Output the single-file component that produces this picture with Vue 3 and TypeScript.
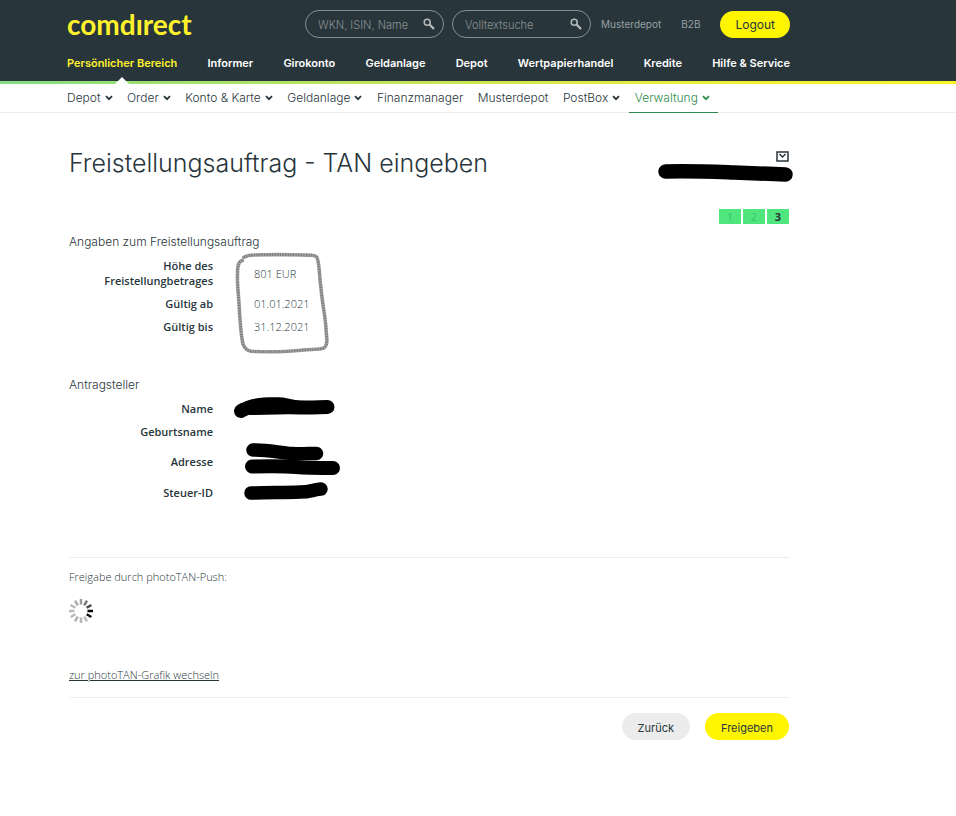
<script setup lang="ts">
interface NavItem {
  label: string
  menu?: boolean
  active?: boolean
}

const mainNav: NavItem[] = [
  { label: 'Persönlicher Bereich', active: true },
  { label: 'Informer' },
  { label: 'Girokonto' },
  { label: 'Geldanlage' },
  { label: 'Depot' },
  { label: 'Wertpapierhandel' },
  { label: 'Kredite' },
  { label: 'Hilfe & Service' },
]

const subNav: NavItem[] = [
  { label: 'Depot', menu: true },
  { label: 'Order', menu: true },
  { label: 'Konto & Karte', menu: true },
  { label: 'Geldanlage', menu: true },
  { label: 'Finanzmanager' },
  { label: 'Musterdepot' },
  { label: 'PostBox', menu: true },
  { label: 'Verwaltung', menu: true, active: true },
]

const searches = [
  { id: 'search-wkn', placeholder: 'WKN, ISIN, Name' },
  { id: 'search-text', placeholder: 'Volltextsuche' },
]

const steps = [1, 2, 3]

// Spinner spokes, clockwise from twelve o'clock
const spokes = ['#999', '#777', '#444', '#000', '#111', '#bbb', '#b5b5b5', '#b0b0b0', '#b8b8b8', '#bbb', '#b8b8b8', '#aaa']

const framePath =
  'M10.5 8.5C6 9 5.500 15 5.500 22C5 34 7 46 7.500 60C8.500 74 9 84 11 92C13 98 17 99.500 22 99.500C36 100 52 100 66 98.500C78 97 86 98 92 96C97 92 94 84 94 76C93 62 90 50 89 36C87 24 88 14 85 5.500C83 2 76 3.500 70 3C54 2.500 36 2.500 22 3C18 3 14 4 11.500 5.500'
</script>

<template>
  <div class="page">
    <header class="header">
      <div class="wrap">
        <div class="topbar">
          <a class="logo" href="#" aria-label="comdirect">comdırect</a>
          <form class="searches" @submit.prevent>
            <label v-for="s in searches" :key="s.id" class="search" :for="s.id">
              <input :id="s.id" type="text" :placeholder="s.placeholder" :aria-label="s.placeholder" />
              <svg viewBox="0 0 12 12" aria-hidden="true">
                <circle cx="4.2" cy="4.2" r="3" />
                <path class="handle" d="M6.8 6.8 10.4 10.4" />
              </svg>
            </label>
          </form>
          <a class="meta" href="#">Musterdepot</a>
          <a class="meta" href="#">B2B</a>
          <button class="btn primary logout" type="button">Logout</button>
        </div>
        <nav class="main-nav">
          <a v-for="n in mainNav" :key="n.label" href="#" :class="{ active: n.active }">{{ n.label }}</a>
        </nav>
      </div>
    </header>

    <div class="subbar">
      <nav class="sub-nav">
        <a v-for="n in subNav" :key="n.label" href="#" :class="{ active: n.active }">
          {{ n.label }}
          <svg v-if="n.menu" viewBox="0 0 8 6" aria-hidden="true"><path d="M1 1.2 4 4.2 7 1.2" /></svg>
        </a>
      </nav>
    </div>

    <main class="content">
      <div class="title-row">
        <h1>Freistellungsauftrag - TAN eingeben</h1>
        <a class="mail" href="#" aria-label="PostBox">
          <svg viewBox="0 0 13 11"><path d="M1 1H12V10H1ZM3.5 3 6.5 6 9.5 3" /></svg>
        </a>
        <svg class="mark mark-user" viewBox="0 0 136 20" aria-hidden="true">
          <path class="ink" d="M7.500 8.500C28 7.500 50 8.500 76 9.500S112 11 127.500 11.500" stroke-width="14.500" />
        </svg>
      </div>

      <ol class="steps">
        <li v-for="s in steps" :key="s" :class="{ current: s === 3 }">{{ s }}</li>
      </ol>

      <section>
        <h2>Angaben zum Freistellungsauftrag</h2>
        <dl>
          <dt>Höhe des Freistellungbetrages</dt>
          <dd>801 EUR</dd>
          <dt>Gültig ab</dt>
          <dd>01.01.2021</dd>
          <dt>Gültig bis</dt>
          <dd>31.12.2021</dd>
        </dl>
        <svg class="mark mark-frame" viewBox="0 0 100 106" aria-hidden="true">
          <path class="pencil" :d="framePath" />
          <path class="grain" :d="framePath" />
        </svg>
      </section>

      <section>
        <h2>Antragsteller</h2>
        <dl>
          <dt>Name</dt>
          <dd></dd>
          <dt>Geburtsname</dt>
          <dd></dd>
          <dt class="tall">Adresse</dt>
          <dd></dd>
          <dt>Steuer-ID</dt>
          <dd></dd>
        </dl>
        <svg class="mark mark-person" viewBox="0 0 112 110" aria-hidden="true">
          <path class="ink" d="M11 17C20 11 44 11 56 12.500S76 13.500 97.500 13" stroke-width="14" />
          <path d="M12 10C18 3 40 3 53 3.500L70 7V20L20 21Z" />
          <path class="ink" d="M23 56C38 55.500 50 59 62 59.500S78 59.500 86.500 59.500" stroke-width="13.500" />
          <path class="ink" d="M22 72.500C42 72 54 72 66 73S88 74 103 74" stroke-width="14" />
          <path class="ink" d="M21 99C40 98.500 56 98.500 70 98C80 98 84 95.500 91 95" stroke-width="13.500" />
        </svg>
      </section>

      <div class="release">
        <p>Freigabe durch photoTAN-Push:</p>
        <svg class="spinner" viewBox="-12 -12 24 24" role="img" aria-label="Bitte warten">
          <line v-for="(c, i) in spokes" :key="i" x1="0" y1="-6.500" x2="0" y2="-12" :stroke="c" :transform="`rotate(${i * 30})`" />
        </svg>
        <a href="#">zur photoTAN-Grafik wechseln</a>
      </div>

      <div class="actions">
        <button class="btn" type="button">Zurück</button>
        <button class="btn primary" type="button">Freigeben</button>
      </div>
    </main>
  </div>
</template>

<style>
body {
  margin: 0;
  background: #fff;
}
</style>

<style scoped>
* {
  box-sizing: border-box;
}
.page {
  font-family: Inter, "Open Sans", sans-serif;
  font-size: 11px;
  color: #28363c;
}
a {
  color: inherit;
  text-decoration: none;
}
.header {
  background: #28363c;
  border-bottom: 3px solid;
  border-image: linear-gradient(90deg, #84dc82, #c8e456 45%, #f2f032 80%, #f8f428) 1;
}
.wrap {
  max-width: 790px;
  padding-left: 67px;
}
.topbar {
  display: flex;
  align-items: center;
  height: 48px;
}
.logo {
  flex: 1;
  font: 700 28px/32px Lato, sans-serif;
  color: #fff22d;
}
.searches {
  display: flex;
  gap: 8px;
  margin-right: 10px;
}
.search {
  display: flex;
  align-items: center;
  width: 139px;
  height: 28px;
  padding: 0 8px 0 12px;
  border: 1px solid #85918f;
  border-radius: 14px;
}
.search input {
  flex: 1;
  min-width: 0;
  padding: 2px 0 0;
  border: 0;
  outline: 0;
  background: none;
  color: #fff;
  font: 300 11px/16px Inter, sans-serif;
}
.search input::placeholder {
  color: #88908f;
  opacity: 1;
}
.search svg {
  width: 12px;
  height: 12px;
  fill: none;
  stroke: #b4bab9;
  stroke-width: 1.5;
  stroke-linecap: round;
}
.search .handle {
  stroke-width: 2.2;
}
.meta {
  margin-right: 20px;
  font-size: 10px;
  color: #96a0a0;
}
.btn {
  height: 27px;
  padding: 2px 16px 0;
  border: 0;
  border-radius: 14px;
  background: #ececec;
  color: #28363c;
  font: 400 11px/16px Inter, sans-serif;
}
.btn.primary {
  background: #fff500;
}
.btn.logout {
  padding: 2px 15px 0;
  font-size: 12px;
}
.main-nav {
  display: flex;
  justify-content: space-between;
  height: 33px;
  font-weight: 600;
  line-height: 30px;
  color: #fff;
}
.main-nav .active {
  position: relative;
  color: #fff22d;
}
.main-nav .active::after {
  content: "";
  position: absolute;
  left: 50%;
  bottom: -3px;
  border: 7px solid transparent;
  border-top: 0;
  border-bottom-color: #fff;
  transform: translateX(-50%);
}
.subbar {
  border-bottom: 1px solid #ececec;
}
.sub-nav {
  display: flex;
  justify-content: space-between;
  max-width: 718px;
  padding-left: 67px;
  margin-bottom: -1px;
  font-size: 12px;
  font-weight: 300;
  line-height: 28px;
}
.sub-nav a {
  display: flex;
  align-items: center;
  gap: 4px;
  border-bottom: 1px solid transparent;
}
.sub-nav svg {
  width: 8px;
  height: 6px;
  fill: none;
  stroke: currentColor;
  stroke-width: 1.8;
}
.sub-nav .active {
  padding: 0 8px 0 6px;
  margin-left: -6px;
  border-color: #2f8b4d;
  color: #2f8b4d;
}
.content {
  max-width: 789px;
  padding: 34px 0 34px 69px;
  font-family: "Open Sans", sans-serif;
}
.title-row {
  position: relative;
  display: flex;
  justify-content: space-between;
  align-items: flex-start;
}
h1 {
  margin: 0;
  font: 300 25px/32px Inter, sans-serif;
}
.mail {
  padding-top: 4px;
}
.mail svg {
  display: block;
  width: 13px;
  height: 11px;
  fill: none;
  stroke: #28363c;
  stroke-width: 1.5;
}
.steps {
  display: flex;
  justify-content: flex-end;
  gap: 2px;
  margin: 30px 0 10px;
  padding: 0;
  list-style: none;
  line-height: 15px;
  text-align: center;
}
.steps li {
  width: 22px;
  background: #50e67e;
  color: #3ac568;
}
.steps .current {
  color: #28363c;
  font-weight: 700;
}
section {
  position: relative;
  margin-bottom: 43px;
}
h2 {
  margin: 0 0 8px;
  font: 300 12px/16px Inter, sans-serif;
}
dl {
  display: grid;
  grid-template-columns: 144px 1fr;
  gap: 8px 41px;
  align-items: center;
  margin: 0;
  line-height: 15px;
}
dt {
  padding-left: 30px;
  font-weight: 600;
  text-align: right;
}
dt.tall {
  line-height: 30px;
}
dd {
  margin: 0;
  font-weight: 300;
}
.mark {
  position: absolute;
  pointer-events: none;
}
.ink {
  fill: none;
  stroke: #000;
  stroke-linecap: round;
}
.mark-user {
  right: -5px;
  top: 16px;
  width: 136px;
  height: 20px;
}
.mark-frame {
  left: 163px;
  top: 18px;
  width: 100px;
  height: 106px;
}
.pencil,
.grain {
  fill: none;
  stroke: #a2a2a2;
  stroke-width: 3.6;
  stroke-linecap: round;
}
.grain {
  stroke: #7c7c7c;
  stroke-width: 2.6;
  stroke-linecap: butt;
  stroke-dasharray: 1.2 1.4;
}
.mark-person {
  left: 161px;
  top: 17px;
  width: 112px;
  height: 110px;
}
.release {
  margin-top: 57px;
  padding: 11px 0 15px;
  border-top: 1px solid #ececec;
  border-bottom: 1px solid #ececec;
  font-weight: 300;
  line-height: 15px;
}
.release p {
  margin: 0 0 15px;
}
.release a {
  text-decoration: underline;
}
.spinner {
  display: block;
  width: 24px;
  height: 24px;
  margin-bottom: 44px;
  stroke-width: 2.5;
}
.actions {
  display: flex;
  justify-content: flex-end;
  gap: 15px;
  padding-top: 15px;
}
</style>
